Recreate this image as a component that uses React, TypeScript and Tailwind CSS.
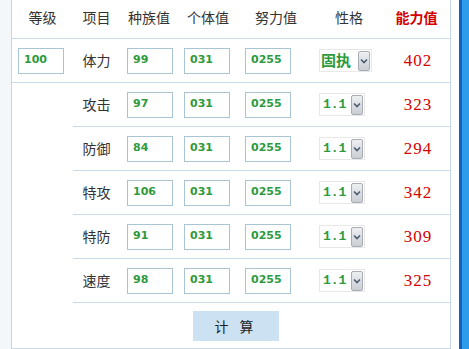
import { ReactNode } from "react";

const rows = [
  { name: "攻击", base: "97", result: "323" },
  { name: "防御", base: "84", result: "294" },
  { name: "特攻", base: "106", result: "342" },
  { name: "特防", base: "91", result: "309" },
  { name: "速度", base: "98", result: "325" },
];

function NumBox({ value }: { value: string }) {
  return (
    <div className="w-[46px] h-[26px] border border-[#a9c4d3] bg-white flex items-center pl-[5px] text-[11px] font-bold text-[#2f9a3c] font-['DejaVu_Sans',sans-serif]">
      {value}
    </div>
  );
}

function Arrow() {
  return (
    <div className="w-[12px] h-[20px] border border-[#a8adb3] rounded-[2px] bg-gradient-to-b from-[#eef0f2] to-[#c9ced4] flex items-center justify-center">
      <svg width="8" height="6" viewBox="0 0 8 6">
        <path d="M1 1.5 L4 4.5 L7 1.5" fill="none" stroke="#4b5a6e" strokeWidth="1.6" />
      </svg>
    </div>
  );
}

function Cell({ className = "", children }: { className?: string; children?: ReactNode }) {
  return <div className={"flex items-center " + className}>{children}</div>;
}

function StatRow({ name, base, result, first }: { name: string; base: string; result: string; first?: boolean }) {
  return (
    <div className="flex h-[44px] border-b border-[#c9dbe7]">
      <Cell className="w-[47px] justify-center text-[14px] text-[#333]">{name}</Cell>
      <Cell className="w-[58px] pl-[7px]"><NumBox value={base} /></Cell>
      <Cell className="w-[60px] pl-[6px]"><NumBox value="031" /></Cell>
      <Cell className="w-[72px] pl-[7px]"><NumBox value="0255" /></Cell>
      <Cell className="w-[73px] pl-[9px]">
        {first ? (
          <div className="h-[23px] w-[53px] border border-[#e8e8e8] flex items-center justify-between pr-[1px]">
            <span className="pl-[1px] text-[15px] font-bold text-[#2f9a3c]">固执</span>
            <Arrow />
          </div>
        ) : (
          <div className="h-[23px] w-[46px] border border-[#e8e8e8] flex items-center justify-between pr-[1px]">
            <span className="pl-[3px] text-[13px] font-bold text-[#2f9a3c] font-['Liberation_Mono',monospace]">1.1</span>
            <Arrow />
          </div>
        )}
      </Cell>
      <Cell className="w-[67px] justify-center pl-[3px] text-[17px] tracking-[1px] text-[#d40000] font-['Liberation_Serif',serif]">
        {result}
      </Cell>
    </div>
  );
}

export default function App() {
  return (
    <div className="flex w-[469px] h-[349px] bg-white font-['Noto_Sans_CJK_SC','Noto_Sans',sans-serif] overflow-hidden">
      <div className="w-[11px] bg-[#f3f7fa]" />
      <div className="w-[440px] border-l border-r border-[#c4d6e2] flex flex-col">
        {/* header */}
        <div className="flex h-[39px] border-b border-[#c9dbe7] text-[14px] text-[#333] pb-[3px]">
          <Cell className="w-[61px] justify-center">等级</Cell>
          <Cell className="w-[47px] justify-center">项目</Cell>
          <Cell className="w-[58px] justify-center">种族值</Cell>
          <Cell className="w-[60px] justify-center">个体值</Cell>
          <Cell className="w-[72px] justify-center pl-[4px]">努力值</Cell>
          <Cell className="w-[73px] justify-center pl-[5px]">性格</Cell>
          <Cell className="w-[67px] justify-center font-bold text-[#d40000]">能力值</Cell>
        </div>
        {/* 体力 row spans full width */}
        <div className="flex">
          <Cell className="w-[61px] h-[44px] pl-[6px] border-b border-[#c9dbe7]">
            <NumBox value="100" />
          </Cell>
          <div className="flex-1">
            <StatRow name="体力" base="99" result="402" first />
          </div>
        </div>
        <div className="flex">
          <div className="w-[61px]" />
          <div className="flex-1">
            {rows.map((r) => (
              <StatRow key={r.name} name={r.name} base={r.base} result={r.result} />
            ))}
          </div>
        </div>
        <div className="flex-1 flex items-center justify-center border-b border-[#c9dbe7]">
          <button className="w-[86px] h-[30px] bg-[#cce2f2] text-[14px] text-[#222] tracking-[4px] ml-[10px] mt-[1px]">
            计 算
          </button>
        </div>
      </div>
      <div className="w-[8px] bg-white" />
      <div className="w-[3px] bg-[#1560bd]" />
      <div className="flex-1 bg-[#2d9ceb]" />
    </div>
  );
}
